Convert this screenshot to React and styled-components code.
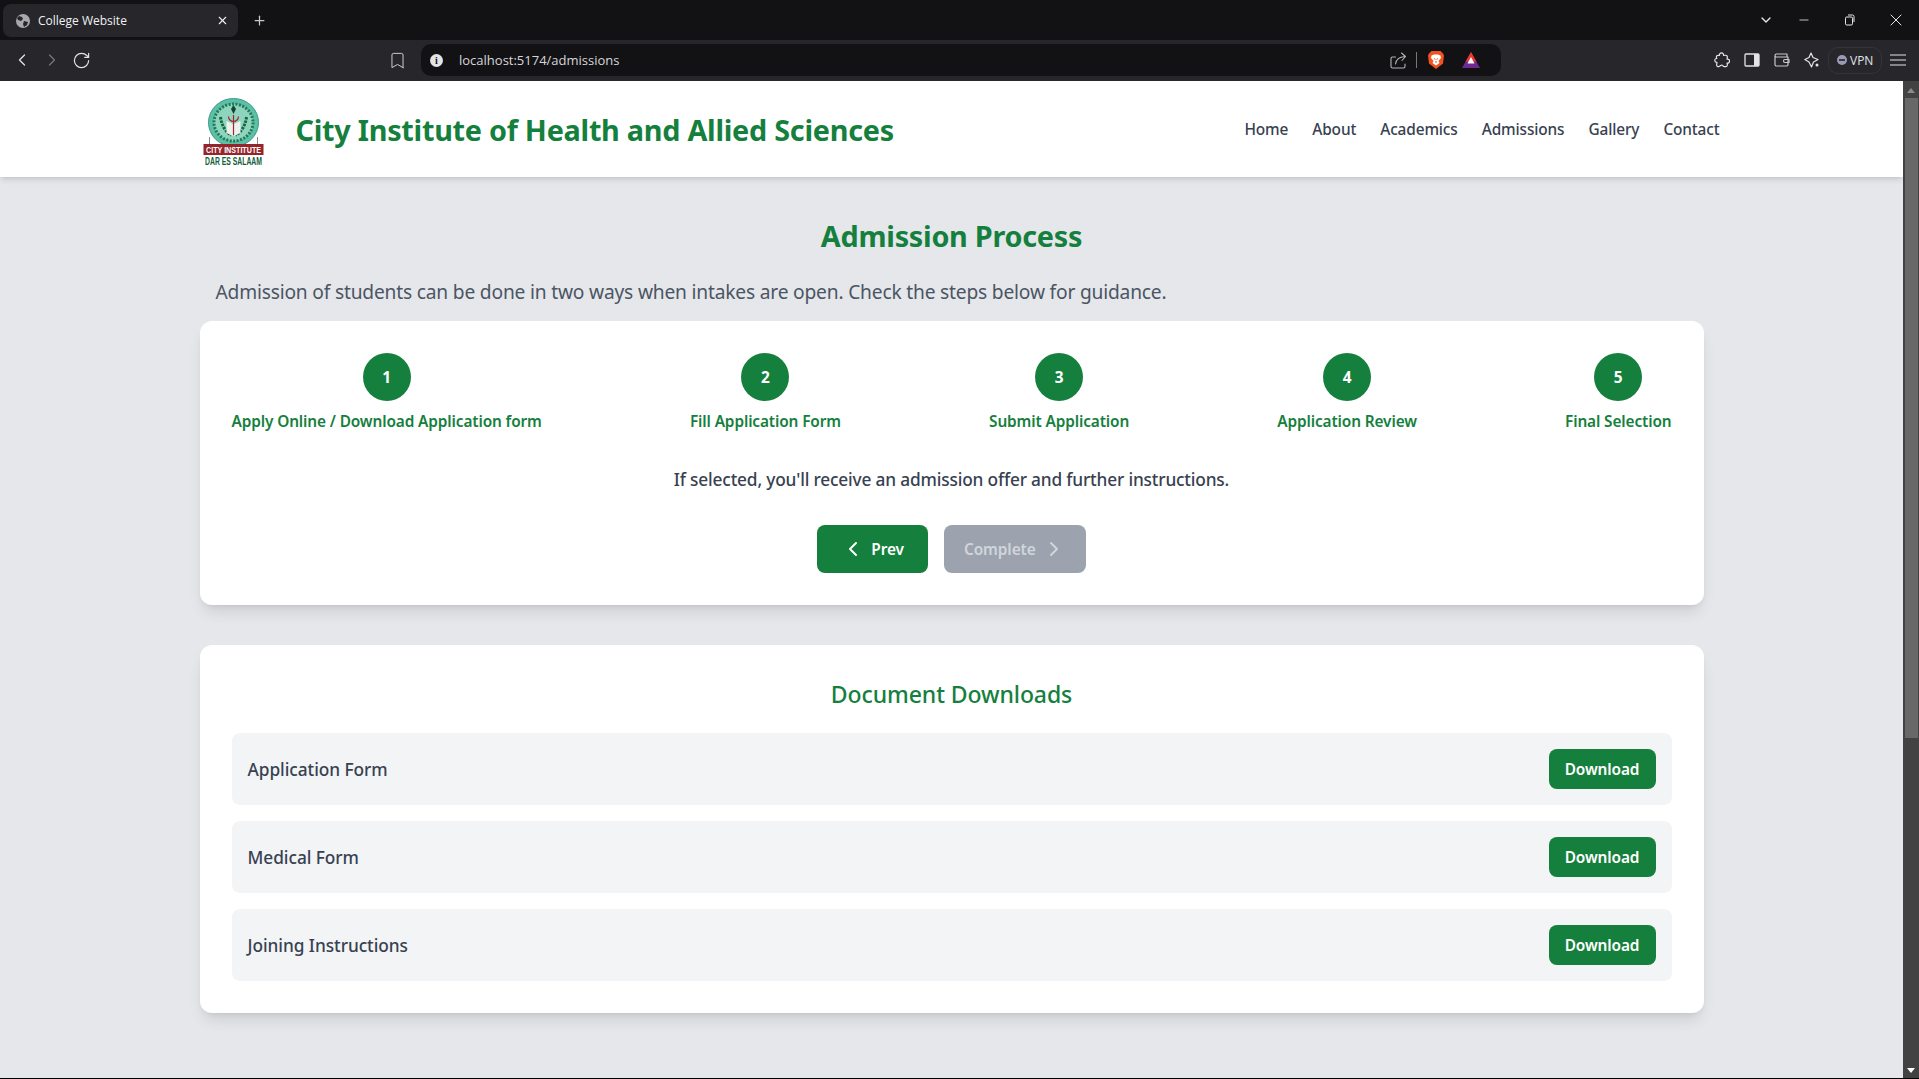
import React from 'react';
import styled, { createGlobalStyle } from 'styled-components';
import { ChevronLeft, ChevronRight, ChevronDown, Plus, X, RotateCw, Bookmark, Minus } from 'lucide-react';

const GREEN = '#15803d';
const STEPS = [
  'Apply Online / Download Application form',
  'Fill Application Form',
  'Submit Application',
  'Application Review',
  'Final Selection',
];
const DOCS = ['Application Form', 'Medical Form', 'Joining Instructions'];
const NAV = ['Home', 'About', 'Academics', 'Admissions', 'Gallery', 'Contact'];

const GlobalStyle = createGlobalStyle`
  html, body { margin: 0; padding: 0; height: 100%; overflow: hidden; }
  body { font-family: "Noto Sans", "Open Sans", sans-serif; background: #000; }
  * { box-sizing: border-box; }
`;

const Screen = styled.div`
  height: 1079px;
  display: flex;
  flex-direction: column;
  padding-bottom: 1px;
`;

const TabStrip = styled.div`
  height: 40px;
  background: #121214;
  display: flex;
  align-items: center;
  padding-left: 3px;
  color: #e8e8ea;
`;

const Tab = styled.div`
  width: 235px;
  height: 33px;
  margin-top: 1px;
  background: #26262b;
  border-radius: 8px;
  display: flex;
  align-items: center;
  padding: 0 9px 0 13px;
  gap: 8px;
  font-family: "Open Sans", sans-serif;
  font-size: 12px;
  color: #f1f1f3;
`;

const TabTitle = styled.span`
  flex: 1;
`;

const NewTab = styled.div`
  display: flex;
  margin-left: 14px;
  color: #c8c8cc;
`;

const WindowControls = styled.div`
  margin-left: auto;
  display: flex;
  align-items: center;
  color: #e8e8ea;
`;

const WindowButton = styled.div`
  width: ${(p) => (p.$narrow ? '30px' : '46px')};
  display: flex;
  justify-content: center;
  align-items: center;
`;

const Toolbar = styled.div`
  height: 41px;
  background: #26262b;
  display: flex;
  align-items: center;
  padding: 0 0 1px 12px;
  color: #e4e4e7;
`;

const NavIcon = styled.div`
  width: 30px;
  display: flex;
  align-items: center;
  color: ${(p) => (p.$dim ? '#77777c' : '#e4e4e7')};
`;

const BookmarkSlot = styled.div`
  margin-left: 286px;
  width: 33px;
  display: flex;
  color: #d4d4d8;
`;

const Omnibox = styled.div`
  width: 1080px;
  height: 32px;
  background: #121214;
  border-radius: 10px;
  display: flex;
  align-items: center;
  padding: 0 21px 0 9px;
  color: #e4e4e7;
`;

const InfoDot = styled.div`
  width: 13px;
  height: 13px;
  border-radius: 50%;
  background: #e4e4e7;
  color: #121214;
  font: 700 10px/13px "Liberation Serif", serif;
  text-align: center;
  margin-right: 16px;
`;

const Url = styled.span`
  font-family: "Open Sans", sans-serif;
  font-size: 13px;
  color: #d6d6da;
  flex: 1;
`;

const Divider = styled.span`
  width: 1px;
  height: 16px;
  background: #77777c;
  margin: 0 11px 0 9px;
`;

const RewardsSlot = styled.span`
  display: flex;
  margin-left: 18px;
`;

const RightIcons = styled.div`
  margin-left: 213px;
  display: flex;
  align-items: center;
  color: #e4e4e7;
`;

const IconGroup = styled.div`
  display: flex;
  align-items: center;
  gap: 14px;
`;

const VpnPill = styled.div`
  width: 54px;
  height: 27px;
  margin-left: 8px;
  border: 1px solid #34343a;
  border-radius: 10px;
  display: flex;
  align-items: center;
  padding-left: 8px;
  gap: 3px;
  font-family: "Open Sans", sans-serif;
  font-size: 12px;
  color: #e4e4e7;
`;

const VpnDot = styled.span`
  width: 10px;
  height: 10px;
  border-radius: 50%;
  background: #9a9ab4;
  display: flex;
  align-items: center;
  justify-content: center;

  &::after {
    content: '';
    width: 6px;
    height: 2px;
    background: #3a3a44;
  }
`;

const MenuSlot = styled.div`
  display: flex;
  margin-left: 8px;
`;

const Viewport = styled.div`
  flex: 1;
  display: flex;
  min-height: 0;
`;

const Page = styled.div`
  flex: 1;
  background: #e5e7eb;
  min-width: 0;
  overflow: hidden;
`;

const Header = styled.header`
  height: 96px;
  background: #fff;
  box-shadow: 0 4px 6px -1px rgba(0, 0, 0, 0.1), 0 2px 4px -2px rgba(0, 0, 0, 0.1);
`;

const HeaderInner = styled.div`
  width: 1536px;
  height: 100%;
  margin: 0 auto;
  display: flex;
  align-items: center;
  justify-content: space-between;
  padding-left: 16px;
`;

const Brand = styled.div`
  display: flex;
  align-items: center;
  gap: 16px;
`;

const SiteTitle = styled.div`
  padding-top: 2px;
  font-size: 28.8px;
  line-height: 36px;
  font-weight: 700;
  letter-spacing: -0.009em;
  color: ${GREEN};
`;

const Nav = styled.nav`
  display: flex;
  gap: 24px;
`;

const NavLink = styled.a`
  height: 24px;
  font-size: 15.4px;
  line-height: 26px;
  font-weight: 500;
  letter-spacing: -0.008em;
  color: #374151;
`;

const Main = styled.main`
  width: 1536px;
  margin: 0 auto;
  padding: 41px 16px 0;
`;

const Heading = styled.h1`
  margin: 0 0 24px;
  font-size: 28.8px;
  line-height: 36px;
  font-weight: 700;
  letter-spacing: -0.009em;
  color: ${GREEN};
  text-align: center;
`;

const Intro = styled.p`
  margin: 0 0 15px;
  padding: 0 16px;
  font-size: 19.2px;
  line-height: 28px;
  letter-spacing: -0.01em;
  color: #4b5563;
`;

const Card = styled.section`
  background: #fff;
  border-radius: 12px;
  padding: 32px;
  margin-bottom: 40px;
  box-shadow: 0 10px 15px -3px rgba(0, 0, 0, 0.1), 0 4px 6px -4px rgba(0, 0, 0, 0.1);
`;

const StepRow = styled.div`
  display: flex;
  justify-content: space-between;
`;

const Step = styled.div`
  display: flex;
  flex-direction: column;
  align-items: center;
  gap: 8px;
`;

const StepCircle = styled.div`
  width: 48px;
  height: 48px;
  border-radius: 50%;
  background: ${GREEN};
  color: #fff;
  display: flex;
  align-items: center;
  justify-content: center;
  font-size: 15.4px;
  font-weight: 700;
`;

const StepLabel = styled.div`
  height: 24px;
  font-size: 15.4px;
  line-height: 26px;
  font-weight: 600;
  letter-spacing: -0.008em;
  color: ${GREEN};
`;

const StepText = styled.p`
  height: 28px;
  margin: 32px 0;
  font-size: 17.3px;
  line-height: 30px;
  font-weight: 500;
  letter-spacing: -0.01em;
  color: #374151;
  text-align: center;
`;

const ButtonRow = styled.div`
  display: flex;
  justify-content: center;
  gap: 16px;
`;

const StepButton = styled.button`
  height: 48px;
  border: 0;
  border-radius: 8px;
  padding: 0 ${(p) => (p.disabled ? '20px' : '24px')};
  display: flex;
  align-items: center;
  gap: 6px;
  font-family: inherit;
  font-size: 15.4px;
  font-weight: 600;
  letter-spacing: -0.005em;
  color: ${(p) => (p.disabled ? '#d1d5db' : '#fff')};
  background: ${(p) => (p.disabled ? '#9ca3af' : GREEN)};
`;

const DocsTitle = styled.h2`
  margin: 0 0 24px;
  padding-top: 1px;
  height: 32px;
  font-size: 23px;
  line-height: 32px;
  font-weight: 500;
  letter-spacing: -0.004em;
  color: ${GREEN};
  text-align: center;
`;

const DocList = styled.div`
  display: flex;
  flex-direction: column;
  gap: 16px;
`;

const DocRow = styled.div`
  background: #f3f4f6;
  border-radius: 8px;
  padding: 16px;
  display: flex;
  align-items: center;
  justify-content: space-between;
`;

const DocName = styled.span`
  height: 28px;
  font-size: 17.3px;
  line-height: 30px;
  font-weight: 500;
  letter-spacing: -0.003em;
  color: #374151;
`;

const DownloadButton = styled.a`
  height: 40px;
  width: 107px;
  border-radius: 8px;
  background: ${GREEN};
  color: #fff;
  display: flex;
  align-items: center;
  justify-content: center;
  font-size: 15.4px;
  font-weight: 600;
  letter-spacing: -0.008em;
`;

const Scrollbar = styled.div`
  width: 16px;
  background: #424242;
  display: flex;
  flex-direction: column;
  align-items: center;
  justify-content: space-between;
  padding: 7px 0 5px;
`;

const ScrollThumb = styled.div`
  width: 13px;
  height: 640px;
  margin: 5px 0 auto;
  background: #686868;
`;

const Arrow = styled.div`
  width: 0;
  height: 0;
  border-left: 4px solid transparent;
  border-right: 4px solid transparent;
  ${(p) => (p.$up ? 'border-bottom: 5px solid #8a8a8a;' : 'border-top: 5px solid #fff;')}
`;

const Globe = () => (
  <svg width="14" height="14" viewBox="0 0 14 14">
    <circle cx="7" cy="7" r="7" fill="#a8a8ae" />
    <path d="M3 2l3 1 1 2-2 2-3-1-1-2zM8 7l4 1-1 3-3 2-1-3z" fill="#26262b" />
  </svg>
);

const Restore = () => (
  <svg width="12" height="12" viewBox="0 0 12 12" fill="none" stroke="currentColor">
    <rect x="1.5" y="3" width="7" height="8" rx="1.2" />
    <path d="M4 1h4.5A1.5 1.5 0 0 1 10 2.5V8" />
  </svg>
);

const ShareOut = () => (
  <svg width="17" height="17" viewBox="0 0 17 17" fill="none" stroke="#b4b4b8" strokeWidth="1.1" strokeLinecap="round" strokeLinejoin="round">
    <path d="M5.500 5H2.500A1.500 1.500 0 0 0 1 6.500v8A1.500 1.500 0 0 0 2.500 16h11a1.500 1.500 0 0 0 1.500-1.500V12" />
    <path d="M5.500 12c.5-4 3.500-7 9.500-7.500M11.500 1L15.500 4.500 12 8.500" />
  </svg>
);

const BraveLion = () => (
  <svg width="16" height="18" viewBox="0 0 16 18">
    <path d="M3.500 0h9L15 2.500l1 2-1 8-7 5.500-7-5.500-1-8 1-2z" fill="#f1521f" />
    <path d="M3.500 4.500L6 3.500h4l2.500 1 .5 2.500L10.500 10l1 2L8 14.500 4.500 12l1-2L3 7z" fill="#fff" />
    <path d="M6 7.500l1.500 1M10 7.500l-1.500 1M8 10v2" stroke="#f1521f" fill="none" />
  </svg>
);

const RewardsTriangle = () => (
  <svg width="18" height="16" viewBox="0 0 18 16">
    <path d="M9 0l9 16H0z" fill="#6c2a92" />
    <path d="M9 0l5.500 9.800H3.500z" fill="#e8392b" />
    <path d="M9 5l3.500 6.500h-7z" fill="#fff" />
  </svg>
);

const Puzzle = () => (
  <svg width="16" height="16" viewBox="0 0 16 16" fill="none" stroke="currentColor" strokeWidth="1.200" strokeLinejoin="round">
    <path d="M5.500 3.500C5.200 1.800 6.200.8 7.500.8s2.300 1 2 2.700c1.300-.3 3-.3 3.500.4.500.8.300 2.300 0 3.300 1.500-.4 2.500.6 2.500 1.900s-1 2.400-2.500 2c.4 1.100.4 2.500-.2 3.100-.8.600-2.300.5-3.300.3-.6-1.200-1.400-1.600-2.300-1.300-.8.300-1.300 1.200-2.300 1.400-1 .2-1.900-.2-2.100-1-.3-1-.1-2 .3-2.900C1.300 10.200.6 9.200.8 8c.2-1 1-1.600 2-1.500-.4-1-.5-2-.1-2.600.6-.6 1.800-.6 2.800-.4z" />
  </svg>
);

const SidebarIcon = () => (
  <svg width="16" height="16" viewBox="0 0 16 16">
    <rect x="1" y="2" width="14" height="12" rx="1" fill="none" stroke="currentColor" strokeWidth="1.300" />
    <rect x="10" y="2" width="5" height="12" fill="currentColor" />
  </svg>
);

const WalletIcon = () => (
  <svg width="16" height="16" viewBox="0 0 16 16" fill="none" stroke="#c8c8cc" strokeWidth="1.200" strokeLinejoin="round">
    <path d="M1 4V12.500A1.500 1.500 0 0 0 2.500 14h10a1.500 1.500 0 0 0 1.500-1.500V5H2.500A1.500 1.500 0 0 1 1 3.500 1.500 1.500 0 0 1 2.500 2H13v3" />
    <path d="M15 7.500h-4a1.500 1.500 0 0 0 0 3h4z" />
  </svg>
);

const Sparkle = () => (
  <svg width="16" height="16" viewBox="0 0 16 16" fill="none" stroke="currentColor" strokeWidth="1.200" strokeLinejoin="round">
    <path d="M7 1l2 4.500L14 7.500 9.500 10 7.500 15 5 10 .8 7.500 5 5.500z" />
    <circle cx="13" cy="13" r="1.500" fill="currentColor" stroke="none" />
  </svg>
);

const Hamburger = () => (
  <svg width="16" height="12" viewBox="0 0 16 12" stroke="currentColor" strokeWidth="1.200">
    <path d="M0 1h16M0 6h16M0 11h16" />
  </svg>
);

const Logo = () => (
  <svg width="80" height="80" viewBox="-3.500 -6 80 80">
    <ellipse cx="30" cy="27.500" rx="25" ry="24" fill="#5dbfa5" stroke="#3a9b8b" />
    <ellipse cx="30" cy="27.500" rx="19.500" ry="18.500" fill="#8fd4bf" stroke="#1f7a55" strokeDasharray="2 1.500" strokeWidth="3" />
    <path d="M17 22c1 9 6 16 11 18M43 22c-1 9-6 16-11 18" fill="none" stroke="#14683f" strokeWidth="3" strokeDasharray="2.500 1" />
    <path d="M30 10l2.500 4-2.500 5-2.500-5z" fill="#11472f" />
    <path d="M23 26l6.500 3v12l-6.500-3zM37 26l-6.500 3v12l6.500-3z" fill="#eef2ee" />
    <path d="M30 20v20M25 21.500a5 5 0 0 0 10 0" fill="none" stroke="#a2262c" strokeWidth="1.200" />
    <path d="M6 42v8M54 42v8" stroke="#8a8a8a" />
    <rect x="0" y="49" width="60" height="11" fill="#96252b" />
    <text transform="translate(30 57.800) scale(1 1.200)" textAnchor="middle" fontFamily="Liberation Sans, sans-serif" fontWeight="700" fontSize="7.500" textLength="55" lengthAdjust="spacingAndGlyphs" fill="#fff">CITY INSTITUTE</text>
    <text transform="translate(30 70) scale(1 1.250)" textAnchor="middle" fontFamily="Liberation Sans, sans-serif" fontWeight="700" fontSize="8" textLength="57" lengthAdjust="spacingAndGlyphs" fill="#15603a">DAR ES SALAAM</text>
  </svg>
);

const App = () => (
  <Screen>
    <GlobalStyle />
    <TabStrip>
      <Tab>
        <Globe />
        <TabTitle>College Website</TabTitle>
        <X size={13} strokeWidth={2} />
      </Tab>
      <NewTab>
        <Plus size={15} />
      </NewTab>
      <WindowControls>
        <WindowButton $narrow><ChevronDown size={16} /></WindowButton>
        <WindowButton><Minus size={14} strokeWidth={1.4} /></WindowButton>
        <WindowButton><Restore /></WindowButton>
        <WindowButton><X size={20} strokeWidth={1.2} /></WindowButton>
      </WindowControls>
    </TabStrip>
    <Toolbar>
      <NavIcon><ChevronLeft size={20} strokeWidth={1.5} /></NavIcon>
      <NavIcon $dim><ChevronRight size={20} strokeWidth={1.5} /></NavIcon>
      <NavIcon><RotateCw size={19} strokeWidth={1.5} /></NavIcon>
      <BookmarkSlot><Bookmark size={19} strokeWidth={1.2} /></BookmarkSlot>
      <Omnibox>
        <InfoDot>i</InfoDot>
        <Url>localhost:5174/admissions</Url>
        <ShareOut />
        <Divider />
        <BraveLion />
        <RewardsSlot><RewardsTriangle /></RewardsSlot>
      </Omnibox>
      <RightIcons>
        <IconGroup>
          <Puzzle />
          <SidebarIcon />
          <WalletIcon />
          <Sparkle />
        </IconGroup>
        <VpnPill><VpnDot />VPN</VpnPill>
        <MenuSlot><Hamburger /></MenuSlot>
      </RightIcons>
    </Toolbar>
    <Viewport>
      <Page>
        <Header>
          <HeaderInner>
            <Brand>
              <Logo />
              <SiteTitle>City Institute of Health and Allied Sciences</SiteTitle>
            </Brand>
            <Nav>
              {NAV.map((item) => <NavLink key={item}>{item}</NavLink>)}
            </Nav>
          </HeaderInner>
        </Header>
        <Main>
          <Heading>Admission Process</Heading>
          <Intro>Admission of students can be done in two ways when intakes are open. Check the steps below for guidance.</Intro>
          <Card>
            <StepRow>
              {STEPS.map((label, i) => (
                <Step key={label}>
                  <StepCircle>{i + 1}</StepCircle>
                  <StepLabel>{label}</StepLabel>
                </Step>
              ))}
            </StepRow>
            <StepText>If selected, you'll receive an admission offer and further instructions.</StepText>
            <ButtonRow>
              <StepButton><ChevronLeft size={24} />Prev</StepButton>
              <StepButton disabled>Complete<ChevronRight size={24} /></StepButton>
            </ButtonRow>
          </Card>
          <Card>
            <DocsTitle>Document Downloads</DocsTitle>
            <DocList>
              {DOCS.map((doc) => (
                <DocRow key={doc}>
                  <DocName>{doc}</DocName>
                  <DownloadButton>Download</DownloadButton>
                </DocRow>
              ))}
            </DocList>
          </Card>
        </Main>
      </Page>
      <Scrollbar>
        <Arrow $up />
        <ScrollThumb />
        <Arrow />
      </Scrollbar>
    </Viewport>
  </Screen>
);

export default App;
